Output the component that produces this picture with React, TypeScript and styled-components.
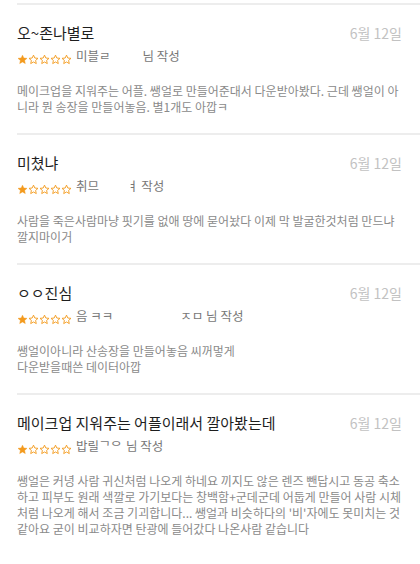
import React, { FunctionComponent } from 'react'
import styled, { createGlobalStyle } from 'styled-components'

const GlobalStyle = createGlobalStyle`
  html, body {
    margin: 0;
    padding: 0;
    background: #ffffff;
  }
  body {
    font-family: "Noto Sans CJK KR", "Noto Sans", sans-serif;
    -webkit-font-smoothing: antialiased;
  }
`

interface Review {
  title: string
  author: string[]
  gap: number
  date: string
  rating: number
  body: string
}

const reviews: Review[] = [
  {
    title: '오~존나별로',
    author: ['미블ㄹ', '님 작성'],
    gap: 32,
    date: '6월 12일',
    rating: 1,
    body:
      '메이크업을 지워주는 어플. 쌩얼로 만들어준대서 다운받아봤다. 근데 쌩얼이 아니라 뭔 송장을 만들어놓음. 별1개도 아깝ㅋ'
  },
  {
    title: '미쳤냐',
    author: ['취므', 'ㅕ 작성'],
    gap: 28,
    date: '6월 12일',
    rating: 1,
    body: '사람을 죽은사람마냥 핏기를 없애 땅에 묻어놨다 이제 막 발굴한것처럼 만드냐\n깔지마이거'
  },
  {
    title: 'ㅇㅇ진심',
    author: ['음 ㅋㅋ', 'ㅈㅁ 님 작성'],
    gap: 67,
    date: '6월 12일',
    rating: 1,
    body: '쌩얼이아니라 산송장을 만들어놓음 씨꺼멓게\n다운받을때쓴 데이터아깝'
  },
  {
    title: '메이크업 지워주는 어플이래서 깔아봤는데',
    author: ['밥릴ᄀᄋ', '님 작성'],
    gap: 4,
    date: '6월 12일',
    rating: 1,
    body:
      "쌩얼은 커녕 사람 귀신처럼 나오게 하네요 끼지도 않은 렌즈 뺀답시고 동공 축소하고 피부도 원래 색깔로 가기보다는 창백함+군데군데 어둡게 만들어 사람 시체처럼 나오게 해서 조금 기괴합니다... 쌩얼과 비슷하다의 '비'자에도 못미치는 것 같아요 굳이 비교하자면 탄광에 들어갔다 나온사람 같습니다"
  }
]

const List = styled.div`
  padding-top: 3px;
  background: #ffffff;
`

const Item = styled.div`
  margin-left: 17px;
  border-top: 2px solid #ededed;
  padding: 17px 17px 18px 0;
`

const TitleRow = styled.div`
  display: flex;
  align-items: center;
  justify-content: space-between;
  height: 22px;
`

const Title = styled.div`
  font-size: 15px;
  line-height: 22px;
  color: #1e1e1e;
  white-space: nowrap;
`

const DateText = styled.div`
  font-size: 14px;
  line-height: 22px;
  color: #c2c2c2;
  white-space: nowrap;
  margin-right: 1px;
`

const MetaRow = styled.div`
  display: flex;
  align-items: flex-end;
  height: 18px;
  margin-top: 4px;
`

const Stars = styled.div`
  display: flex;
  gap: 0;
  margin-right: 4px;
  padding-bottom: 1px;
`

const Author = styled.span<{ $gap: number }>`
  font-size: 12.5px;
  line-height: 18px;
  color: #777777;
  margin-right: ${p => p.$gap}px;
  position: relative;
  top: -1px;

  &:last-child {
    margin-right: 0;
  }
`

const Body = styled.div`
  margin-top: 17px;
  font-size: 12px;
  line-height: 16px;
  color: #8a8a8a;
  white-space: pre-line;
`

const Star: FunctionComponent<{ filled: boolean }> = ({ filled }) => (
  <svg width='11' height='11' viewBox='0 0 24 24'>
    <path
      d='M12 2.5l2.9 6.3 6.9.7-5.2 4.6 1.5 6.8L12 17.4l-6.1 3.5 1.5-6.8-5.2-4.6 6.9-.7z'
      fill={filled ? '#f39a1d' : 'none'}
      stroke='#f39a1d'
      strokeWidth={filled ? 1 : 2}
      strokeLinejoin='round'
    />
  </svg>
)

const ReviewItem: FunctionComponent<{ data: Review }> = ({ data }) => {
  const { title, author, gap, date, rating, body } = data
  return (
    <Item>
      <TitleRow>
        <Title>{title}</Title>
        <DateText>{date}</DateText>
      </TitleRow>
      <MetaRow>
        <Stars>
          {[0, 1, 2, 3, 4].map(i => (
            <Star key={i} filled={i < rating} />
          ))}
        </Stars>
        {author.map((part, i) => (
          <Author key={i} $gap={gap}>
            {part}
          </Author>
        ))}
      </MetaRow>
      <Body>{body}</Body>
    </Item>
  )
}

export default function App() {
  return (
    <>
      <GlobalStyle />
      <List>
        {reviews.map((r, i) => (
          <ReviewItem key={i} data={r} />
        ))}
      </List>
    </>
  )
}
